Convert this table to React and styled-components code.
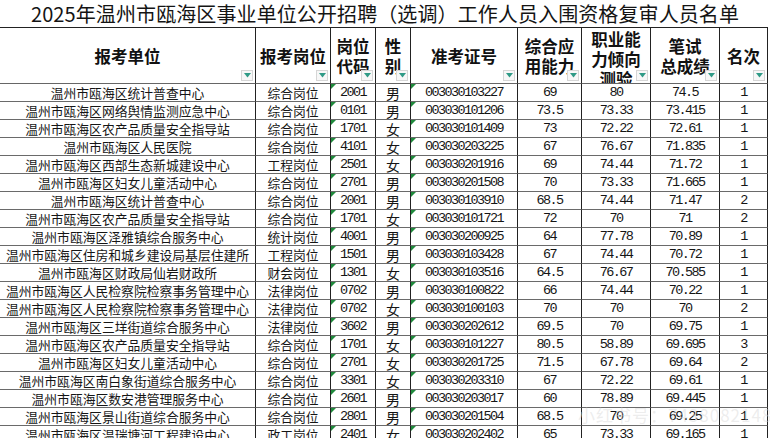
import React from "react";
import styled, { createGlobalStyle } from "styled-components";

const GlobalStyle = createGlobalStyle`
  html, body {
    margin: 0;
    padding: 0;
    background: #ffffff;
  }
  body {
    font-family: "Noto Sans CJK SC", "Noto Sans", sans-serif;
    color: #111;
  }
`;

// column widths taken from the sheet, sum = 768
const COLS = [256, 75, 45, 35, 107, 64, 69, 69, 48];

const HEADERS = [
  { lines: ["报考单位"] },
  { lines: ["报考岗位"] },
  { lines: ["岗位", "代码"] },
  { lines: ["性", "别"] },
  { lines: ["准考证号"] },
  { lines: ["综合应", "用能力"] },
  { lines: ["职业能", "力倾向", "测验"], top: true },
  { lines: ["笔试", "总成绩"] },
  { lines: ["名次"] }
];

const ROWS = [
  ["温州市瓯海区统计普查中心", "综合岗位", "2001", "男", "003030103227", "69", "80", "74.5", "1"],
  ["温州市瓯海区网络舆情监测应急中心", "综合岗位", "0101", "男", "003030101206", "73.5", "73.33", "73.415", "1"],
  ["温州市瓯海区农产品质量安全指导站", "综合岗位", "1701", "女", "003030101409", "73", "72.22", "72.61", "1"],
  ["温州市瓯海区人民医院", "综合岗位", "4101", "女", "003030203225", "67", "76.67", "71.835", "1"],
  ["温州市瓯海区西部生态新城建设中心", "工程岗位", "2501", "女", "003030201916", "69", "74.44", "71.72", "1"],
  ["温州市瓯海区妇女儿童活动中心", "综合岗位", "2701", "男", "003030201508", "70", "73.33", "71.665", "1"],
  ["温州市瓯海区统计普查中心", "综合岗位", "2001", "男", "003030103910", "68.5", "74.44", "71.47", "2"],
  ["温州市瓯海区农产品质量安全指导站", "综合岗位", "1701", "女", "003030101721", "72", "70", "71", "2"],
  ["温州市瓯海区泽雅镇综合服务中心", "统计岗位", "4001", "男", "003030200925", "64", "77.78", "70.89", "1"],
  ["温州市瓯海区住房和城乡建设局基层住建所", "工程岗位", "1501", "男", "003030103428", "67", "74.44", "70.72", "1"],
  ["温州市瓯海区财政局仙岩财政所", "财会岗位", "1301", "女", "003030103516", "64.5", "76.67", "70.585", "1"],
  ["温州市瓯海区人民检察院检察事务管理中心", "法律岗位", "0702", "男", "003030100822", "66", "74.44", "70.22", "1"],
  ["温州市瓯海区人民检察院检察事务管理中心", "法律岗位", "0702", "女", "003030100103", "70", "70", "70", "2"],
  ["温州市瓯海区三垟街道综合服务中心", "法律岗位", "3602", "男", "003030202612", "69.5", "70", "69.75", "1"],
  ["温州市瓯海区农产品质量安全指导站", "综合岗位", "1701", "女", "003030101227", "80.5", "58.89", "69.695", "3"],
  ["温州市瓯海区妇女儿童活动中心", "综合岗位", "2701", "女", "003030201725", "71.5", "67.78", "69.64", "2"],
  ["温州市瓯海区南白象街道综合服务中心", "综合岗位", "3301", "女", "003030203310", "67", "72.22", "69.61", "1"],
  ["温州市瓯海区数安港管理服务中心", "综合岗位", "2601", "男", "003030203017", "60", "78.89", "69.445", "1"],
  ["温州市瓯海区景山街道综合服务中心", "综合岗位", "2801", "男", "003030201504", "68.5", "70", "69.25", "1"],
  ["温州市瓯海区温瑞塘河工程建设中心", "政工岗位", "2401", "女", "003030202402", "65", "73.33", "69.165", "1"]
];

// columns holding numbers stored as text (green corner mark)
const TEXT_NUM_COLS = [2, 4];
const NUM_COLS = [2, 4, 5, 6, 7, 8];

const App = () => {
  return (
    <>
      <GlobalStyle />
      <Page>
        <Title>2025年温州市瓯海区事业单位公开招聘（选调）工作人员入围资格复审人员名单</Title>
        <Sheet>
          {HEADERS.map((h, i) => (
            <HeadCell key={i} $top={h.top}>
              <HeadText>
                {h.lines.map((l, j) => (
                  <span key={j}>{l}</span>
                ))}
              </HeadText>
              <FilterButton>
                <svg width="7" height="5" viewBox="0 0 7 5">
                  <path d="M0 0 L7 0 L3.5 4.5 Z" fill="#2f9a86" />
                </svg>
              </FilterButton>
            </HeadCell>
          ))}
          {ROWS.map((row, r) =>
            row.map((val, c) => (
              <Cell
                key={`${r}-${c}`}
                $num={NUM_COLS.includes(c)}
                $gender={c === 3}
              >
                {TEXT_NUM_COLS.includes(c) && <CornerMark />}
                {val}
              </Cell>
            ))
          )}
        </Sheet>
        <Watermark>小红书号：7438082148</Watermark>
      </Page>
    </>
  );
};

export default App;

const Page = styled.div`
  position: relative;
  width: 770px;
  height: 438px;
  overflow: hidden;
  background: #fff;
`;

const Title = styled.div`
  height: 27px;
  display: flex;
  align-items: center;
  justify-content: center;
  font-size: 20px;
  font-weight: 400;
  color: #141414;
  white-space: nowrap;
  letter-spacing: 0.1px;
`;

const Sheet = styled.div`
  display: grid;
  grid-template-columns: ${COLS.map(w => `${w}px`).join(" ")};
  grid-auto-rows: 18px;
  grid-template-rows: 56px;
  width: 768px;
  border-top: 1px solid #222;
  border-right: 1px solid #222;
  box-sizing: border-box;
`;

const HeadCell = styled.div`
  position: relative;
  display: flex;
  align-items: ${p => (p.$top ? "flex-start" : "center")};
  justify-content: center;
  padding-top: ${p => (p.$top ? "1px" : "0")};
  overflow: hidden;
  box-sizing: border-box;
  border-right: 1px solid #222;
  border-bottom: 1px solid #666;
  font-weight: 700;
  font-size: 16.5px;
  line-height: 20px;
  color: #111;
`;

const HeadText = styled.div`
  display: flex;
  flex-direction: column;
  align-items: center;
  white-space: nowrap;
`;

const FilterButton = styled.div`
  position: absolute;
  right: 2px;
  bottom: 2px;
  width: 12px;
  height: 11px;
  box-sizing: border-box;
  display: flex;
  align-items: center;
  justify-content: center;
  background: #f7f7f7;
  border: 1px solid #d6d6d6;
`;

const Cell = styled.div`
  position: relative;
  display: flex;
  align-items: center;
  justify-content: center;
  box-sizing: border-box;
  border-right: 1px solid #222;
  border-bottom: 1px solid #6a6a6a;
  white-space: nowrap;
  overflow: hidden;
  font-family: ${p =>
    p.$num
      ? `"Liberation Mono", "DejaVu Sans Mono", monospace`
      : `"Noto Sans CJK SC", "Noto Sans", sans-serif`};
  font-size: ${p => (p.$num ? "13.5px" : p.$gender ? "14px" : "12.8px")};
  letter-spacing: ${p => (p.$num ? "-1.6px" : "0")};
  color: #151515;
  line-height: 16px;
`;

const CornerMark = styled.span`
  position: absolute;
  left: 0;
  top: 0;
  width: 0;
  height: 0;
  border-top: 5px solid #1f8a3c;
  border-right: 5px solid transparent;
`;

const Watermark = styled.div`
  position: absolute;
  left: 578px;
  top: 402px;
  font-size: 17px;
  letter-spacing: 1px;
  color: rgba(215, 215, 215, 0.45);
  pointer-events: none;
  white-space: nowrap;
`;
